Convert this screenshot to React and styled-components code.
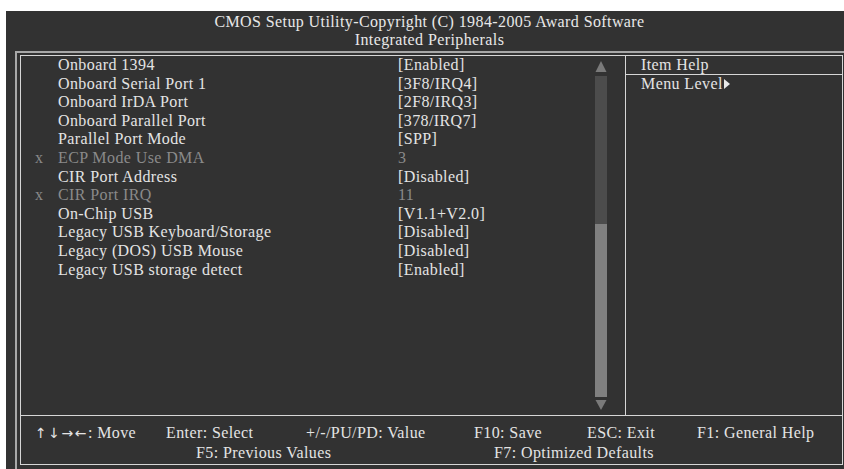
import React from "react";
import styled, { createGlobalStyle } from "styled-components";

const items = [
  { label: "Onboard 1394", value: "[Enabled]" },
  { label: "Onboard Serial Port 1", value: "[3F8/IRQ4]" },
  { label: "Onboard IrDA Port", value: "[2F8/IRQ3]" },
  { label: "Onboard Parallel Port", value: "[378/IRQ7]" },
  { label: "Parallel Port Mode", value: "[SPP]" },
  { label: "ECP Mode Use DMA", value: "3", disabled: true },
  { label: "CIR Port Address", value: "[Disabled]" },
  { label: "CIR Port IRQ", value: "11", disabled: true },
  { label: "On-Chip USB", value: "[V1.1+V2.0]" },
  { label: "Legacy USB Keyboard/Storage", value: "[Disabled]" },
  { label: "Legacy (DOS) USB Mouse", value: "[Disabled]" },
  { label: "Legacy USB storage detect", value: "[Enabled]" },
];

const GlobalStyle = createGlobalStyle`
  body {
    margin: 0;
    background: #ffffff;
    font-family: "Liberation Serif", "DejaVu Serif", serif;
  }
`;

const Screen = styled.div`
  margin: 11px 0 0 6px;
  height: 458px;
  background: #323232;
  color: #e4e4e4;
  overflow: hidden;
  font-size: 16px;
  letter-spacing: 0.4px;
`;

const Title = styled.div`
  padding: 2px 0 0 9px;
  text-align: center;
  line-height: 18px;
  height: 36px;
  margin-bottom: 2px;
  color: #e8e8e8;
`;

const Frame = styled.div`
  margin-left: 9px;
  width: 840px;
  height: 430px;
  border-top: 2px solid #a8a8a8;
  border-left: 2px solid #a8a8a8;
  padding: 2px 0 0 3px;
  box-sizing: border-box;
`;

const Inner = styled.div`
  width: 823px;
  height: 410px;
  box-sizing: border-box;
  border: 1px solid #d6d6d6;
  display: flex;
  flex-direction: column;
`;

const Main = styled.div`
  height: 359px;
  display: flex;
`;

const LeftPanel = styled.div`
  width: 604px;
  display: flex;
`;

const List = styled.div`
  flex: 1;
  line-height: 18.6px;
`;

const Row = styled.div`
  display: grid;
  grid-template-columns: 37px 340px 1fr;
  color: ${(p) => (p.$disabled ? "#8a8a8a" : "#e4e4e4")};
  white-space: nowrap;
`;

const Marker = styled.span`
  padding-left: 14px;
`;

const Scrollbar = styled.div`
  width: 12px;
  margin-right: 18px;
  padding-top: 5px;
  display: flex;
  flex-direction: column;
  align-items: center;
`;

const Arrow = styled.svg`
  display: block;
  fill: #7a7a7a;
`;

const Track = styled.div`
  width: 12px;
  height: 321px;
  margin: 4px 0 3px;
  background: #4c4c4c;
  display: flex;
  flex-direction: column;
  justify-content: flex-end;
`;

const Thumb = styled.div`
  height: ${(p) => p.$size}px;
  background: #808080;
`;

const HelpPanel = styled.div`
  width: 216px;
  border-left: 1px solid #d6d6d6;
  line-height: 18.6px;
`;

const HelpHead = styled.div`
  height: 18px;
  line-height: 17px;
  padding-left: 15px;
  border-bottom: 1px solid #d6d6d6;
`;

const HelpLine = styled.div`
  padding-left: 15px;
  display: flex;
  align-items: center;
`;

const Pointer = styled.svg`
  margin-left: 1px;
  fill: #e8e8e8;
`;

const Footer = styled.div`
  flex: 1;
  border-top: 1px solid #d6d6d6;
  padding-top: 7px;
  line-height: 19px;
  white-space: nowrap;
`;

const KeyRow = styled.div`
  display: grid;
  grid-template-columns: ${(p) => p.$cols};
  padding-left: ${(p) => p.$indent}px;
`;

const Key = styled.span``;

const Arrows = styled.span`
  font-family: "DejaVu Sans", sans-serif;
  font-size: 14px;
  letter-spacing: 1.5px;
`;

export default function App() {
  return (
    <>
      <GlobalStyle />
      <Screen>
        <Title>
          <div>CMOS Setup Utility-Copyright (C) 1984-2005 Award Software</div>
          <div>Integrated Peripherals</div>
        </Title>
        <Frame>
          <Inner>
            <Main>
              <LeftPanel>
                <List>
                  {items.map((it) => (
                    <Row key={it.label} $disabled={it.disabled}>
                      <Marker>{it.disabled ? "x" : ""}</Marker>
                      <span>{it.label}</span>
                      <span>{it.value}</span>
                    </Row>
                  ))}
                </List>
                <Scrollbar>
                  <Arrow width="12" height="11" viewBox="0 0 12 11">
                    <polygon points="6,0 11.5,11 0.5,11" />
                  </Arrow>
                  <Track>
                    <Thumb $size={173} />
                  </Track>
                  <Arrow width="12" height="10" viewBox="0 0 12 10">
                    <polygon points="0.5,0 11.5,0 6,10" />
                  </Arrow>
                </Scrollbar>
              </LeftPanel>
              <HelpPanel>
                <HelpHead>Item Help</HelpHead>
                <HelpLine>
                  Menu Level
                  <Pointer width="6" height="10" viewBox="0 0 6 10">
                    <polygon points="0,0 6,5 0,10" />
                  </Pointer>
                </HelpLine>
              </HelpPanel>
            </Main>
            <Footer>
              <KeyRow $indent={14} $cols="131px 140px 168px 113px 110px auto">
                <Key>
                  <Arrows>↑↓→←</Arrows>: Move
                </Key>
                <Key>Enter: Select</Key>
                <Key>+/-/PU/PD: Value</Key>
                <Key>F10: Save</Key>
                <Key>ESC: Exit</Key>
                <Key>F1: General Help</Key>
              </KeyRow>
              <KeyRow $indent={175} $cols="298px auto">
                <Key>F5: Previous Values</Key>
                <Key>F7: Optimized Defaults</Key>
              </KeyRow>
            </Footer>
          </Inner>
        </Frame>
      </Screen>
    </>
  );
}
